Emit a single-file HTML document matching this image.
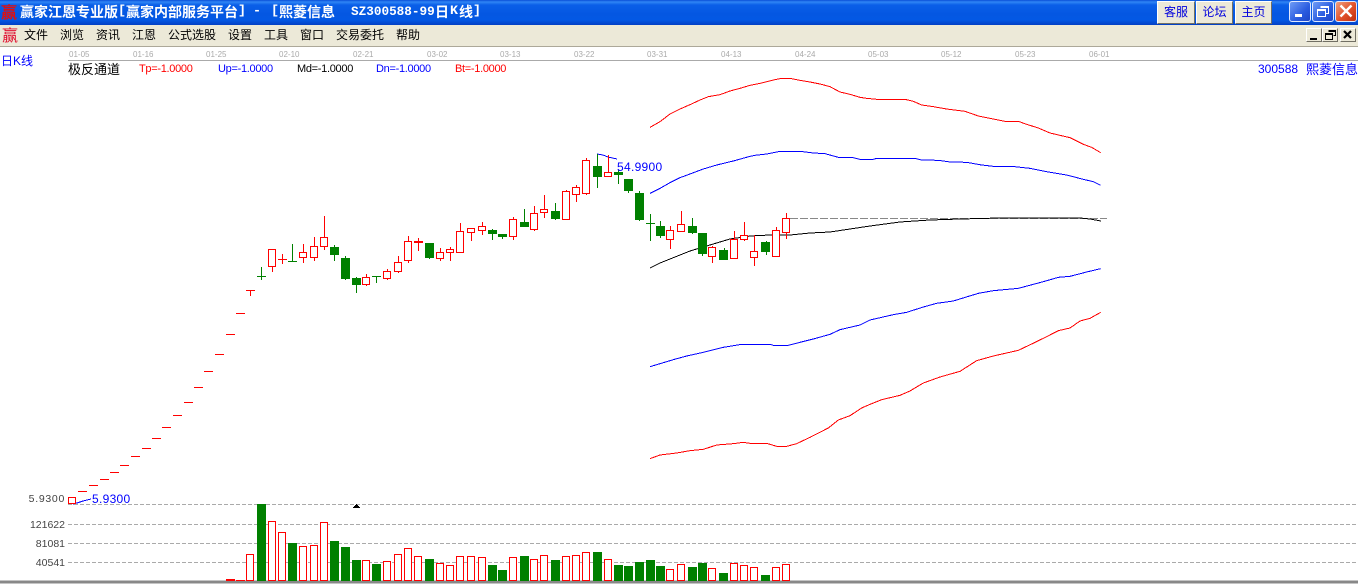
<!DOCTYPE html>
<html><head><meta charset="utf-8"><style>
html,body{margin:0;padding:0;background:#fff;width:1358px;height:585px;overflow:hidden}
body{position:relative;font-family:"Liberation Sans","WenQuanYi Zen Hei","Noto Sans CJK SC",sans-serif}
.t{position:absolute;white-space:pre;line-height:14px}
.cj{font-family:"WenQuanYi Zen Hei","Noto Sans CJK SC",sans-serif}
#title{position:absolute;left:0;top:0;width:1358px;height:25px;background:linear-gradient(#0a4fd8 0,#2f86f5 2px,#0a5fe8 5px,#0457e2 14px,#0358e4 20px,#0340c4 25px)}
#menu{position:absolute;left:0;top:25px;width:1358px;height:21px;background:#ece9d8;border-bottom:1px solid #aca899}
.ti{color:#fff;font-weight:bold;font-size:14px;top:5px;font-family:"WenQuanYi Zen Hei","Noto Sans CJK SC",sans-serif}
.tm{color:#fff;font-weight:bold;font-size:13.33px;top:5px;font-family:"Liberation Mono",monospace}
.m{font-size:12px;top:3px;color:#000;font-family:"WenQuanYi Zen Hei","Noto Sans CJK SC",sans-serif}
.btn{position:absolute;top:1px;height:23px;background:#ece9d8;border:1px solid;border-color:#fff #716f64 #716f64 #fff;color:#00d;font-size:12px;text-align:center;line-height:19px;box-sizing:border-box;font-family:"WenQuanYi Zen Hei","Noto Sans CJK SC",sans-serif}
.w{position:absolute;top:1px;width:22px;height:21px;border:1px solid #dfe8ff;border-radius:3px;box-sizing:border-box;background:linear-gradient(135deg,#6f9cf5,#2a5ce0 60%,#1d45c8)}
.mb{position:absolute;top:28px;width:16px;height:14px;background:#ece9d8;border:1px solid;border-color:#fff #716f64 #716f64 #fff;box-sizing:border-box}
.d{position:absolute;top:50px;font-size:8px;color:#aaa;line-height:10px}
.p{font-size:11px;top:62px;letter-spacing:-.3px}
.y{font-size:10.5px;color:#444;text-align:right;width:45px;left:20px}
.b{font-size:12px;color:#00f;letter-spacing:.3px}
</style></head><body>
<div id="title">
<span class="t" style="left:1px;top:4px;color:#e01010;font-size:16px;font-weight:bold;font-family:'WenQuanYi Zen Hei','Noto Sans CJK SC',sans-serif">赢</span>
<span class="t ti" style="left:20px">赢家江恩专业版</span>
<span class="t tm" style="left:118px">[</span>
<span class="t ti" style="left:126px">赢家内部服务平台</span>
<span class="t tm" style="left:238px">]</span>
<span class="t tm" style="left:253px">-</span>
<span class="t tm" style="left:271px">[</span>
<span class="t ti" style="left:279px">熙菱信息</span>
<span class="t tm" style="left:351px;font-size:12.7px">SZ300588-99</span>
<span class="t ti" style="left:435px">日</span>
<span class="t tm" style="left:450px">K</span>
<span class="t ti" style="left:459px">线</span>
<span class="t tm" style="left:473px">]</span>
<div class="btn" style="left:1157px;width:38px">客服</div>
<div class="btn" style="left:1196px;width:37px">论坛</div>
<div class="btn" style="left:1235px;width:37px">主页</div>
<div class="w" style="left:1289px"><svg width="20" height="19" style="display:block"><rect x="5" y="12" width="7" height="3" fill="#fff"/></svg></div>
<div class="w" style="left:1312px"><svg width="20" height="19" style="display:block"><path d="M7.500 4.500h8v7h-3M4.500 7.500h8v7h-8z M7.500 5.500h8M4.500 8.500h8" fill="none" stroke="#fff"/></svg></div>
<div class="w" style="left:1335px;background:linear-gradient(135deg,#f0a080,#e0502a 55%,#c03010)"><svg width="20" height="19" style="display:block"><path d="M4.500 3.500l11 11M15.500 3.500l-11 11" stroke="#fff" stroke-width="2.400" fill="none"/></svg></div>
</div>
<div id="menu">
<span class="t" style="left:2px;top:2px;color:#e01030;font-size:16px;font-family:'WenQuanYi Zen Hei','Noto Sans CJK SC',sans-serif">赢</span>
<span class="t m" style="left:24px">文件</span>
<span class="t m" style="left:60px">浏览</span>
<span class="t m" style="left:96px">资讯</span>
<span class="t m" style="left:132px">江恩</span>
<span class="t m" style="left:168px">公式选股</span>
<span class="t m" style="left:228px">设置</span>
<span class="t m" style="left:264px">工具</span>
<span class="t m" style="left:300px">窗口</span>
<span class="t m" style="left:336px">交易委托</span>
<span class="t m" style="left:396px">帮助</span>
</div>
<div class="mb" style="left:1306px"><svg width="14" height="12" style="display:block"><rect x="3" y="9" width="7" height="2" fill="#000"/></svg></div>
<div class="mb" style="left:1322px"><svg width="14" height="12" style="display:block"><path d="M5.500 1.500h7v5h-2M2.500 4.500h7v6h-7zM5.500 2.500h7M2.500 5.500h7" fill="none" stroke="#000" shape-rendering="crispEdges"/></svg></div>
<div class="mb" style="left:1340px"><svg width="14" height="12" style="display:block"><path d="M3 2l7 7M10 2l-7 7" stroke="#000" stroke-width="2.200" fill="none"/></svg></div>

<span class="d" style="left:69px">01-05</span><span class="d" style="left:133px">01-16</span><span class="d" style="left:206px">01-25</span><span class="d" style="left:279px">02-10</span><span class="d" style="left:353px">02-21</span><span class="d" style="left:427px">03-02</span><span class="d" style="left:500px">03-13</span><span class="d" style="left:574px">03-22</span><span class="d" style="left:647px">03-31</span><span class="d" style="left:721px">04-13</span><span class="d" style="left:795px">04-24</span><span class="d" style="left:868px">05-03</span><span class="d" style="left:941px">05-12</span><span class="d" style="left:1015px">05-23</span><span class="d" style="left:1089px">06-01</span>

<svg width="1358" height="585" style="position:absolute;left:0;top:0" fill="none">
<g shape-rendering="crispEdges">
<path d="M68 60.500H1358" stroke="#aaa"/>
<path d="M68 504.500H1356M68 524.500H1356M68 543.500H1356M68 562.500H1356" stroke="#aaa" stroke-dasharray="4 2"/>
<path d="M0 582H1358" stroke="#888" stroke-width="3"/>
<path d="M790 218.500H1107" stroke="#888" stroke-dasharray="8 2"/>
<g transform="translate(640,70) scale(.33333)" stroke-width="3">
<path d="M30 172L60 155 90 132 120 117 150 104 180 90 205 80 240 74 270 63 300 55 330 46 360 40 400 30 425 25 450 25 480 31 510 36 540 42 570 50 600 66 630 73 660 82 680 85 710 88 795 88 820 94 845 105 880 110 920 117 975 124 1015 138 1060 147 1095 154 1135 154 1160 163 1195 174 1230 189 1290 203 1330 223 1355 232 1382 248" stroke="#f00"/>
<path d="M30 370L60 355 90 338 120 323 150 312 190 297 230 285 280 273 330 259 345 256 380 252 420 244 480 244 520 249 555 251 595 262 635 262 660 268 700 268 710 265 825 265 845 270 895 271 930 276 980 277 1025 285 1060 289 1115 289 1170 295 1220 305 1280 315 1330 328 1360 335 1382 346" stroke="#00f"/>
</g>
<g transform="translate(640,260) scale(.33333)" stroke-width="3">
<path d="M30 320L60 311 100 299 140 288 190 277 250 262 305 253 390 253 400 256 445 256 480 247 520 237 570 223 600 209 660 195 690 180 760 164 800 157 850 141 890 130 940 123 1015 100 1060 92 1135 85 1210 65 1255 52 1290 49 1340 36 1382 26" stroke="#00f"/>
<path d="M30 596L60 585 110 579 150 572 190 568 230 555 280 551 310 547 330 550 380 550 410 559 440 559 470 551 510 532 565 504 595 480 630 467 665 444 690 433 725 419 780 406 810 393 850 369 900 351 960 334 985 318 1010 302 1060 288 1135 271 1175 252 1220 230 1255 212 1290 204 1320 183 1350 175 1382 157" stroke="#f00"/>
</g>
<path d="M650 268L660 263 670 259 690 251 710 245 730 239 750 236 770 235 790 235 810 233 830 232 850 229 870 226 900 222 930 220 960 219 1000 218 1040 218 1080 218 1090 219 1101 221" stroke="#000"/>
<path d="M73 504L77 503 83 501 91 499" stroke="#00f"/>
<path d="M597 154L603 155 608 157 617 159" stroke="#00f"/>
<!-- red dashes -->
<path stroke="#f00" d="M78 491.500h9M89 485.500h9M100 479.500h9M110 472.500h9M120 465.500h9M131 456.500h9M142 448.500h9M152 438.500h9M162 427.500h9M173 415.500h9M184 402.500h9M194 387.500h9M204 371.500h9M215 354.500h9M226 334.500h9M236 313.500h9M246 290.500h9M250.500 290V296M278 259.500h9M282.500 254V264M414 242.500h9M414 241.500h9M418.500 238V251"/>
<!-- green wicks -->
<path stroke="#008000" d="M257 276.500h9M261.500 267V280M288 261.500h9M292.500 244V261M334.500 245V261M345.500 256V280M356.500 277V293M372 276.500h9M376.500 276V283M429.500 243V259M492.500 229V240M502.500 234V239M524.500 209V222M555.500 203V220M597.500 154V188M618.500 170V184M628.500 179V193M639.500 191V221M646 223.500h9M650.500 214V241M660.500 221V238M692.500 218V234M702.500 233V256M724.500 248V250M766.500 241V255"/>
<!-- green boxes -->
<path fill="#008000" d="M330 247h9v8h-9zM341 258h9v21h-9zM352 278h9v7h-9zM425 243h9v15h-9zM488 230h9v4h-9zM498 234h9v3h-9zM520 222h9v5h-9zM551 211h9v8h-9zM593 166h9v11h-9zM614 172h9v3h-9zM624 179h9v12h-9zM635 193h9v27h-9zM656 226h9v10h-9zM688 226h9v7h-9zM698 233h9v21h-9zM719 250h9v10h-9zM761 242h9v10h-9z"/>
<!-- red hollow -->
<path stroke="#f00" fill="#fff" d="M68.500 497.500h7v6h-7zM268.500 249.500h7v17h-7zM299.500 252.500h7v5h-7zM310.500 246.500h7v11h-7zM320.500 237.500h7v9h-7zM362.500 277.500h7v7h-7zM383.500 271.500h7v7h-7zM394.500 262.500h7v9h-7zM404.500 241.500h7v19h-7zM436.500 252.500h7v6h-7zM446.500 249.500h7v3h-7zM456.500 231.500h7v21h-7zM467.500 228.500h7v4h-7zM478.500 226.500h7v4h-7zM509.500 219.500h7v17h-7zM530.500 213.500h7v16h-7zM540.500 209.500h7v3h-7zM562.500 191.500h7v28h-7zM572.500 187.500h7v7h-7zM582.500 160.500h7v33h-7zM604.500 172.500h7v4h-7zM666.500 230.500h7v9h-7zM677.500 224.500h7v7h-7zM708.500 247.500h7v9h-7zM730.500 239.500h7v19h-7zM740.500 235.500h7v4h-7zM750.500 251.500h7v6h-7zM772.500 230.500h7v26h-7zM782.500 218.500h7v14h-7z"/>
<!-- red wicks -->
<path stroke="#f00" d="M272.500 267V272M303.500 244V252M303.500 258V263M314.500 237V246M314.500 258V261M324.500 216V237M324.500 247V250M366.500 274V277M366.500 285V286M387.500 269V271M387.500 279V280M398.500 256V262M398.500 272V273M408.500 236V241M408.500 261V263M440.500 248V252M440.500 259V261M450.500 247V249M450.500 253V261M460.500 223V231M471.500 233V241M482.500 222V226M482.500 231V235M513.500 217V219M513.500 237V240M534.500 206V213M534.500 230V231M544.500 195V209M544.500 213V218M566.500 190V191M576.500 185V187M576.500 195V202M586.500 158V160M586.500 194V195M608.500 155V172M670.500 226V230M670.500 240V249M681.500 211V224M712.500 246V247M712.500 257V263M734.500 231V239M744.500 222V235M744.500 240V241M754.500 235V251M754.500 258V266M776.500 227V230M786.500 213V218M786.500 233V239"/>
<!-- volume green -->
<path fill="#008000" d="M257 504h9v77h-9zM288 543h9v38h-9zM330 541h9v40h-9zM341 547h9v34h-9zM352 560h9v21h-9zM372 564h9v17h-9zM425 559h9v22h-9zM488 565h9v16h-9zM498 570h9v11h-9zM520 556h9v25h-9zM551 560h9v21h-9zM593 552h9v29h-9zM614 565h9v16h-9zM624 566h9v15h-9zM635 562h9v19h-9zM646 560h9v21h-9zM656 566h9v15h-9zM688 567h9v14h-9zM698 563h9v18h-9zM719 573h9v8h-9zM761 575h9v6h-9z"/>
<!-- volume red -->
<path fill="#f00" d="M226 579h9v2h-9zM236 580h9v1h-9z"/>
<path stroke="#f00" fill="#fff" d="M246.500 554.500h7v26h-7zM268.500 521.500h7v59h-7zM278.500 532.500h7v48h-7zM299.500 546.500h7v34h-7zM310.500 545.500h7v35h-7zM320.500 522.500h7v58h-7zM362.500 560.500h7v20h-7zM383.500 561.500h7v19h-7zM394.500 554.500h7v26h-7zM404.500 548.500h7v32h-7zM414.500 556.500h7v24h-7zM436.500 563.500h7v17h-7zM446.500 565.500h7v15h-7zM456.500 556.500h7v24h-7zM467.500 556.500h7v24h-7zM478.500 557.500h7v23h-7zM509.500 557.500h7v23h-7zM530.500 559.500h7v21h-7zM540.500 555.500h7v25h-7zM562.500 556.500h7v24h-7zM572.500 555.500h7v25h-7zM582.500 552.500h7v28h-7zM604.500 559.500h7v21h-7zM666.500 569.500h7v11h-7zM677.500 564.500h7v16h-7zM708.500 568.500h7v12h-7zM730.500 563.500h7v17h-7zM740.500 565.500h7v15h-7zM750.500 567.500h7v13h-7zM772.500 567.500h7v13h-7zM782.500 564.500h7v16h-7z"/>
<path fill="#000" d="M356 504h1v1h1v1h1v1h1v1h-7v-1h1v-1h1v-1h1z"/>
</g>
</svg>

<span class="t" style="left:1px;top:54px;font-size:12px;color:#00f">日K线</span>
<span class="t cj" style="left:68px;top:62px;font-size:13px;color:#000">极反通道</span>
<span class="t p" style="left:139px;color:#f00">Tp=-1.0000</span>
<span class="t p" style="left:218px;color:#00f">Up=-1.0000</span>
<span class="t p" style="left:297px;color:#000">Md=-1.0000</span>
<span class="t p" style="left:376px;color:#00f">Dn=-1.0000</span>
<span class="t p" style="left:455px;color:#f00">Bt=-1.0000</span>
<span class="t" style="left:1258px;top:62px;font-size:12px;color:#00f">300588</span>
<span class="t cj" style="left:1306px;top:62px;font-size:13px;color:#00f">熙菱信息</span>
<span class="t b" style="left:617px;top:160px">54.9900</span>
<span class="t b" style="left:92px;top:492px">5.9300</span>
<span class="t y" style="top:492px;letter-spacing:.7px">5.9300</span>
<span class="t y" style="top:518px">121622</span>
<span class="t y" style="top:537px">81081</span>
<span class="t y" style="top:556px">40541</span>
</body></html>
